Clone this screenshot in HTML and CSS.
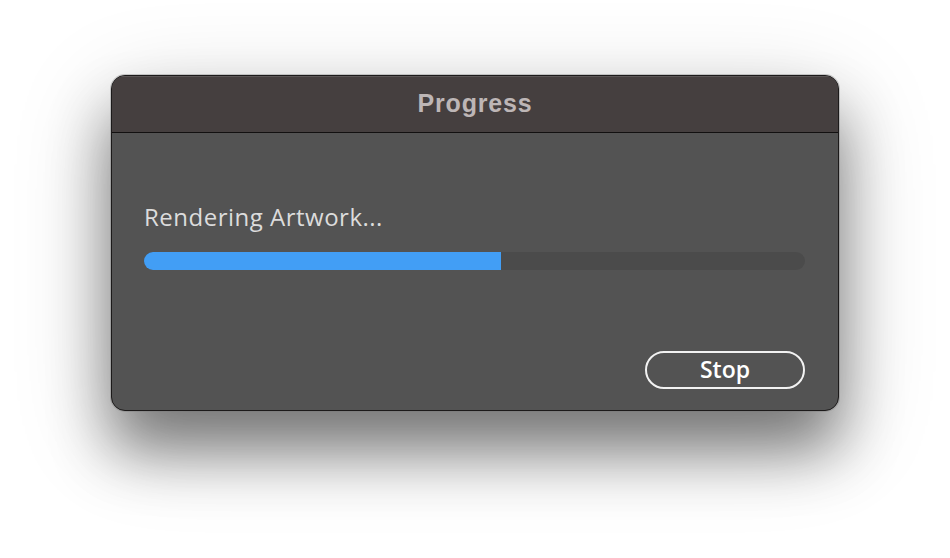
FILE: index.html
```html
<!DOCTYPE html>
<html>
<head>
<meta charset="utf-8">
<link rel="stylesheet" href="styles.css">
</head>
<body>
<div class="stage">
  <div class="dialog">
    <div class="titlebar"><span class="title">Progress</span></div>
    <div class="content">
      <div class="label">Rendering Artwork...</div>
      <div class="track"><div class="fill" style="width: 54%"></div></div>
      <div class="actions"><button class="btn">Stop</button></div>
    </div>
  </div>
</div>
</body>
</html>
```
FILE: styles.css
```css
html, body {
  margin: 0;
  padding: 0;
  background: #ffffff;
  width: 950px;
  height: 558px;
  overflow: hidden;
}
.stage {
  padding: 75px 0 0 111px;
}
.dialog {
  width: 728px;
  height: 336px;
  box-sizing: border-box;
  border: 1px solid #1c1a1a;
  border-radius: 14px;
  background: #535353;
  overflow: hidden;
  box-shadow: 0 0 0 1px rgba(120,120,120,0.35), 0 40px 60px rgba(0,0,0,0.45), 0 25px 100px rgba(0,0,0,0.2);
  display: flex;
  flex-direction: column;
}
.titlebar {
  height: 56px;
  background: #453f3f;
  border-bottom: 1px solid #121010;
  box-shadow: inset 0 1px 0 rgba(255,255,255,0.12);
  display: flex;
  align-items: center;
  justify-content: center;
}
.title {
  font-family: "Liberation Sans", Arial, sans-serif;
  font-weight: bold;
  font-size: 25px;
  letter-spacing: 0.8px;
  color: #bdb6b6;
  margin-top: -1px;
}
.content {
  flex: 1;
  padding: 70px 33px 0 32px;
  display: flex;
  flex-direction: column;
}
.label {
  font-family: "Open Sans", sans-serif;
  font-size: 24px;
  letter-spacing: 0.5px;
  color: #dcdcdc;
  line-height: 30px;
  margin-top: -1px;
}
.track {
  margin-top: 20px;
  height: 18px;
  border-radius: 9px;
  background: #4b4b4b;
  overflow: hidden;
}
.fill {
  height: 100%;
  background: #429ef5;
}
.actions {
  margin-top: 81px;
  display: flex;
  justify-content: flex-end;
}
.btn {
  width: 160px;
  height: 38px;
  box-sizing: border-box;
  border: 2px solid #f2f2f2;
  border-radius: 19px;
  background: transparent;
  color: #ffffff;
  font-family: "Open Sans", sans-serif;
  font-weight: 600;
  font-size: 23px;
  line-height: 1;
  padding: 0 0 2px;
}
```
